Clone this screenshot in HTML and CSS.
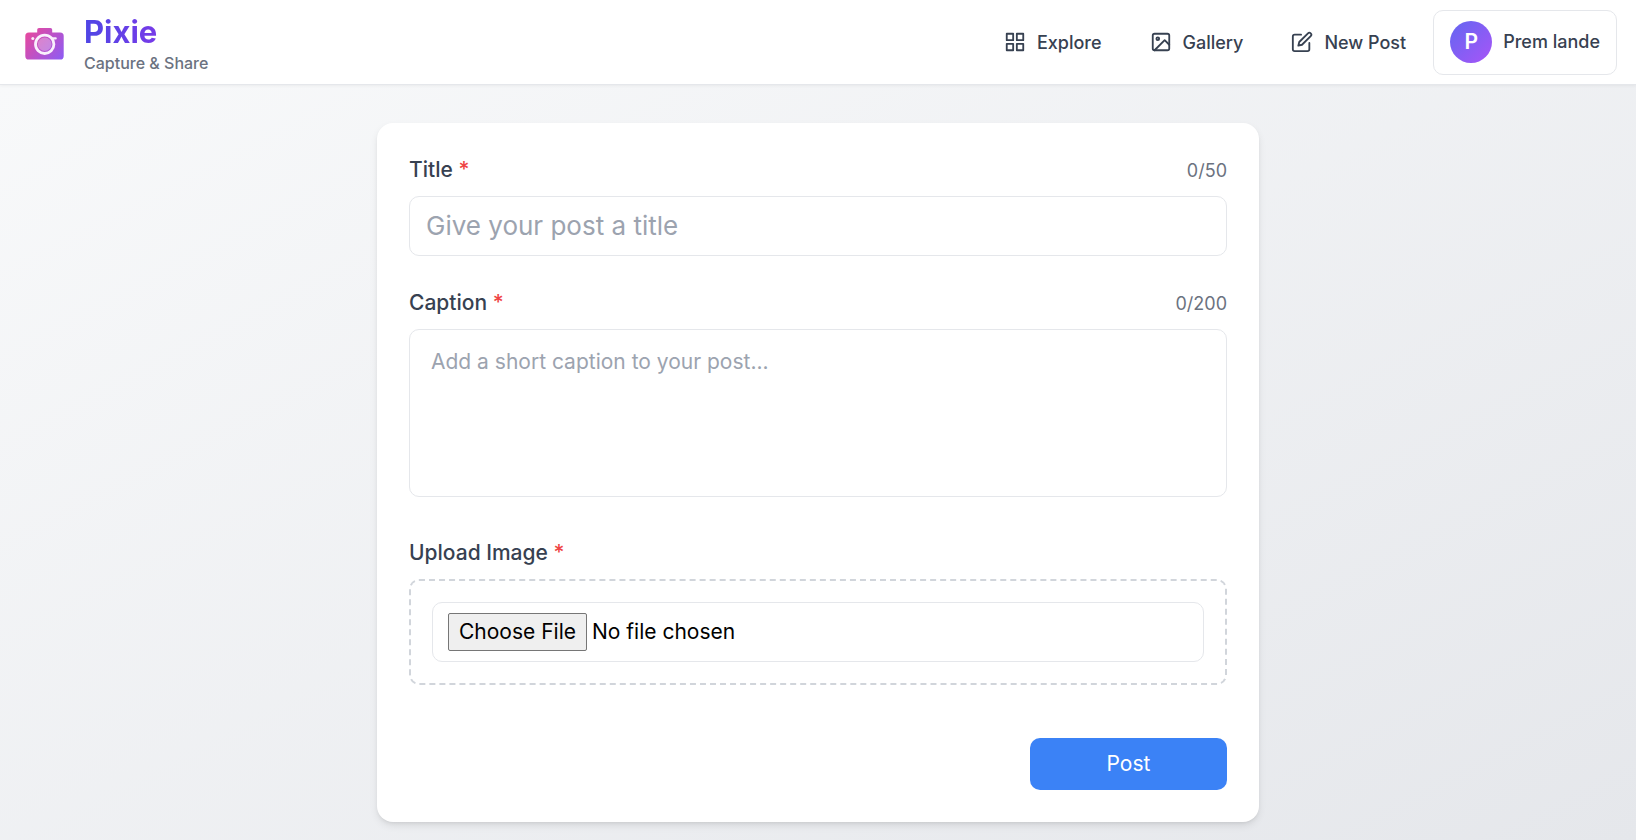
FILE: index.html
```html
<!DOCTYPE html>
<html lang="en">
<head>
  <meta charset="utf-8">
  <meta name="viewport" content="width=device-width, initial-scale=1">
  <title>Pixie - New Post</title>
  <link rel="stylesheet" href="styles.css">
</head>
<body>
  <header class="header">
    <a class="brand" href="#">
      <svg class="brand-logo" viewBox="0 0 42 42" aria-hidden="true">
        <defs>
          <linearGradient id="camera" gradientUnits="userSpaceOnUse" x1="2" y1="5" x2="40" y2="37">
            <stop offset="0" stop-color="#ec4899"/>
            <stop offset="1" stop-color="#8b5cf6"/>
          </linearGradient>
        </defs>
        <rect x="13.2" y="5" width="15" height="8" rx="1.8" fill="url(#camera)"/>
        <rect x="1.3" y="9.5" width="38.4" height="27" rx="3.6" fill="url(#camera)"/>
        <circle cx="8.8" cy="15.4" r="1.5" fill="#fff" opacity=".9"/>
        <rect x="26.500" y="14.3" width="6.3" height="2.2" rx="1.1" fill="#fff" opacity=".9"/>
        <circle cx="20.700" cy="21.3" r="9.2" fill="url(#camera)" stroke="#f9f0fc" stroke-width="2.8"/>
        <circle cx="20.700" cy="21.3" r="6.8" fill="#fff" opacity=".3"/>
      </svg>
      <span class="brand-text">
        <span class="brand-name">Pixie</span>
        <span class="brand-tagline">Capture &amp; Share</span>
      </span>
    </a>
    <nav class="nav" aria-label="Main">
      <a class="nav-link" href="#">
        <svg class="nav-icon" viewBox="0 0 24 24" aria-hidden="true"><rect x="3" y="3" width="7" height="7"/><rect x="14" y="3" width="7" height="7"/><rect x="14" y="14" width="7" height="7"/><rect x="3" y="14" width="7" height="7"/></svg>
        Explore
      </a>
      <a class="nav-link" href="#">
        <svg class="nav-icon" viewBox="0 0 24 24" aria-hidden="true"><rect x="3" y="3" width="18" height="18" rx="2"/><circle cx="8.5" cy="8.5" r="1.5"/><polyline points="21 15 16 10 5 21"/></svg>
        Gallery
      </a>
      <a class="nav-link" href="#">
        <svg class="nav-icon" viewBox="0 0 24 24" aria-hidden="true"><path d="M11 4H4a2 2 0 0 0-2 2v14a2 2 0 0 0 2 2h14a2 2 0 0 0 2-2v-7"/><path d="M18.5 2.5a2.121 2.121 0 0 1 3 3L12 15l-4 1 1-4 9.5-9.5z"/></svg>
        New Post
      </a>
      <button class="profile" type="button">
        <span class="avatar">P</span>
        Prem lande
      </button>
    </nav>
  </header>

  <main class="main">
    <form class="card">
      <div class="field">
        <div class="field-head">
          <label class="label" for="title">Title <span class="required">*</span></label>
          <span class="counter">0/50</span>
        </div>
        <input class="control title-input" id="title" type="text" maxlength="50" placeholder="Give your post a title">
      </div>
      <div class="field field-caption">
        <div class="field-head">
          <label class="label" for="caption">Caption <span class="required">*</span></label>
          <span class="counter">0/200</span>
        </div>
        <textarea class="control caption-input" id="caption" maxlength="200" placeholder="Add a short caption to your post..."></textarea>
      </div>
      <div class="field">
        <div class="field-head">
          <label class="label" for="image">Upload Image <span class="required">*</span></label>
        </div>
        <div class="dropzone">
          <input class="control file-input" id="image" type="file" accept="image/*">
        </div>
      </div>
      <div class="actions">
        <button class="submit" type="submit">Post</button>
      </div>
    </form>
  </main>
</body>
</html>
```
FILE: styles.css
```css
* {
  box-sizing: border-box;
}

body {
  margin: 0;
  min-height: 100vh;
  background: linear-gradient(to bottom right, #f9fafb, #e5e7eb);
  color: #374151;
  font: 21px/32px Inter, "Liberation Sans", sans-serif;
}

.header {
  display: flex;
  align-items: center;
  justify-content: space-between;
  height: 85px;
  padding: 0 19px 0 24px;
  border-bottom: 1px solid #e5e7eb;
  background: #fff;
  box-shadow: 0 1px 3px rgba(0, 0, 0, 0.05);
}

.brand {
  display: flex;
  align-items: center;
  gap: 18px;
  padding-top: 4px;
  text-decoration: none;
}

.brand-logo {
  width: 42px;
  height: 42px;
}

.brand-text {
  display: flex;
  flex-direction: column;
  gap: 4px;
}

.brand-name {
  background: linear-gradient(to right, #4f46e5, #9333ea);
  background-clip: text;
  color: transparent;
  font-size: 31px;
  font-weight: 700;
  line-height: 34px;
}

.brand-tagline {
  color: #6b7280;
  font-size: 16px;
  font-weight: 500;
  line-height: 21px;
}

.nav {
  display: flex;
  align-items: center;
  gap: 6px;
}

.nav-link,
.profile {
  display: flex;
  align-items: center;
  gap: 11px;
  color: #374151;
  font-size: 18px;
  font-weight: 500;
  line-height: 27px;
  text-decoration: none;
}

.nav-link {
  padding: 10px 21px;
}

.nav-icon {
  width: 22px;
  height: 22px;
  fill: none;
  stroke: currentColor;
  stroke-width: 2;
  stroke-linecap: round;
  stroke-linejoin: round;
}

.profile {
  padding: 10px 16px 11px;
  border: 1px solid #e5e7eb;
  border-radius: 10px;
  background: #fff;
  font-family: inherit;
}

.avatar {
  display: grid;
  place-items: center;
  width: 42px;
  height: 42px;
  border-radius: 50%;
  background: linear-gradient(to bottom right, #6366f1, #a855f7);
  color: #fff;
  font-size: 21px;
  font-weight: 600;
}

.main {
  padding: 38px 16px 16px;
}

.card {
  display: flex;
  flex-direction: column;
  gap: 32px;
  max-width: 882px;
  margin: 0 auto;
  padding: 32px;
  border-radius: 16px;
  background: #fff;
  box-shadow: 0 4px 8px -1px rgba(0, 0, 0, 0.1), 0 2px 4px -2px rgba(0, 0, 0, 0.1);
}

.field {
  display: flex;
  flex-direction: column;
  gap: 9px;
}

.field-caption {
  padding-bottom: 9px;
}

.field-head {
  display: flex;
  align-items: flex-start;
  justify-content: space-between;
  min-height: 32px;
}

.label {
  font-weight: 500;
  line-height: 30px;
}

.required {
  color: #ef4444;
}

.counter {
  color: #6b7280;
  font-size: 18px;
}

.control {
  display: block;
  width: 100%;
  border: 1px solid #e5e7eb;
  border-radius: 10px;
  background: #fff;
  font-family: inherit;
}

.control::placeholder {
  color: #9ca3af;
}

.title-input {
  height: 60px;
  padding: 12px 16px 14px;
  font-size: 26px;
}

.caption-input {
  height: 168px;
  padding: 16px 21px;
  font-size: 21px;
  line-height: 32px;
  resize: none;
}

.dropzone {
  padding: 21px;
  border: 2px dashed #d1d5db;
  border-radius: 10px;
}

.file-input {
  padding: 10px 15px;
  color: #000;
  font-size: 21px;
}

.file-input::file-selector-button {
  margin: 0 5px 0 0;
  padding: 0 10px;
  border: 1px solid #767676;
  border-radius: 2px;
  background: #efefef;
  color: #000;
  font: inherit;
  line-height: 36px;
}

.actions {
  display: flex;
  justify-content: flex-end;
  padding-top: 21px;
}

.submit {
  width: 197px;
  padding: 10px 21px;
  border: 0;
  border-radius: 10px;
  background: #3b82f6;
  color: #fff;
  font: inherit;
}
```
